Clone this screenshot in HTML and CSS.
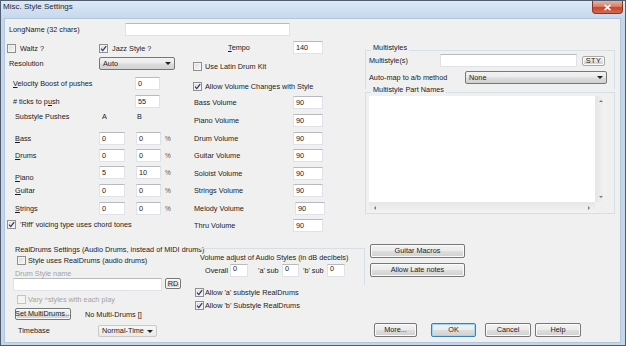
FILE: index.html
```html
<!DOCTYPE html>
<html lang="en">
<head>
    <meta charset="UTF-8">
    <meta name="viewport" content="width=device-width, initial-scale=1.0">
    <title>Misc. Style Settings</title>
    <link rel="stylesheet" href="styles.css">
</head>
<body>
<div class="window">
    <div class="titlebar">
        <span class="title">Misc. Style Settings</span>
        <span class="close">
            <svg width="9" height="7" viewBox="0 0 9 7"><path d="M1.5 0.8 L7.5 6.2 M7.5 0.8 L1.5 6.2" stroke="#fff" stroke-width="1.7" fill="none"/></svg>
        </span>
    </div>

    <div class="client">
        <!-- left + middle columns -->
        <div class="left">
            <div class="row r-longname">
                <span class="lbl lbl-long">LongName (32 chars)</span>
                <span class="edit edit-long"></span>
            </div>

            <div class="cols">
                <div class="col-a">
                    <div class="row r-checks">
                        <span class="check check-waltz"><span class="box"></span>Waltz ?</span>
                        <span class="check"><span class="box"><svg width="7" height="7" viewBox="0 0 7 7"><path d="M1 3.6 L2.8 5.6 L6.2 1.2" /></svg></span>Jazz Style ?</span>
                    </div>
                    <div class="row r-res">
                        <span class="lbl lbl-res">Resolution</span>
                        <span class="combo combo-res">Auto<i class="arrow"></i></span>
                    </div>
                    <div class="row r-push r-vel">
                        <span class="lbl lbl-push"><u>V</u>elocity Boost of pushes</span>
                        <span class="edit edit-push">0</span>
                    </div>
                    <div class="row r-push r-ticks">
                        <span class="lbl lbl-push"># ticks to p<u>u</u>sh</span>
                        <span class="edit edit-push">55</span>
                    </div>
                    <div class="row r-head">
                        <span class="lbl lbl-sub">Substyle Pushes</span>
                        <span class="lbl lbl-a">A</span>
                        <span class="lbl">B</span>
                    </div>
                    <div class="row r-part first">
                        <span class="lbl lbl-part"><u>B</u>ass</span>
                        <span class="edit edit-a">0</span><span class="edit edit-b">0</span><span class="pct">%</span>
                    </div>
                    <div class="row r-part">
                        <span class="lbl lbl-part"><u>D</u>rums</span>
                        <span class="edit edit-a">0</span><span class="edit edit-b">0</span><span class="pct">%</span>
                    </div>
                    <div class="row r-part">
                        <span class="lbl lbl-part lbl-low"><u>P</u>iano</span>
                        <span class="edit edit-a">5</span><span class="edit edit-b">10</span><span class="pct">%</span>
                    </div>
                    <div class="row r-part wide">
                        <span class="lbl lbl-part"><u>G</u>uitar</span>
                        <span class="edit edit-a">0</span><span class="edit edit-b">0</span><span class="pct">%</span>
                    </div>
                    <div class="row r-part wide">
                        <span class="lbl lbl-part"><u>S</u>trings</span>
                        <span class="edit edit-a">0</span><span class="edit edit-b">0</span><span class="pct">%</span>
                    </div>
                    <div class="row r-riff">
                        <span class="check"><span class="box"><svg width="7" height="7" viewBox="0 0 7 7"><path d="M1 3.6 L2.8 5.6 L6.2 1.2" /></svg></span>'Riff' voicing type uses chord tones</span>
                    </div>
                </div>

                <div class="col-b">
                    <div class="row r-tempo">
                        <span class="lbl lbl-tempo"><u>T</u>empo</span>
                        <span class="edit edit-vol">140</span>
                    </div>
                    <div class="row r-flag r-latin">
                        <span class="check"><span class="box"></span>Use Latin Drum Kit</span>
                    </div>
                    <div class="row r-flag r-allow">
                        <span class="check"><span class="box"><svg width="7" height="7" viewBox="0 0 7 7"><path d="M1 3.6 L2.8 5.6 L6.2 1.2" /></svg></span>Allow Volume Changes with Style</span>
                    </div>
                    <div class="row r-vol">
                        <span class="lbl lbl-vol">Bass Volume</span><span class="edit edit-vol">90</span>
                    </div>
                    <div class="row r-vol wide">
                        <span class="lbl lbl-vol">Piano Volume</span><span class="edit edit-vol">90</span>
                    </div>
                    <div class="row r-vol wide">
                        <span class="lbl lbl-vol">Drum Volume</span><span class="edit edit-vol">90</span>
                    </div>
                    <div class="row r-vol">
                        <span class="lbl lbl-vol">Guitar Volume</span><span class="edit edit-vol">90</span>
                    </div>
                    <div class="row r-vol wide">
                        <span class="lbl lbl-vol">Soloist Volume</span><span class="edit edit-vol">90</span>
                    </div>
                    <div class="row r-vol">
                        <span class="lbl lbl-vol">Strings Volume</span><span class="edit edit-vol">90</span>
                    </div>
                    <div class="row r-vol wide">
                        <span class="lbl lbl-vol">Melody Volume</span><span class="edit edit-vol nudge">90</span>
                    </div>
                    <div class="row r-vol">
                        <span class="lbl lbl-vol">Thru Volume</span><span class="edit edit-vol">90</span>
                    </div>
                </div>
            </div>

            <!-- RealDrums -->
            <div class="rd">
                <div class="rd-left">
                    <div class="row rd-cap">RealDrums Settings (Audio Drums, instead of MIDI drums)</div>
                    <div class="row r-rdflag">
                        <span class="check"><span class="box"></span>Style uses RealDrums (audio drums)</span>
                    </div>
                    <div class="row r-dsn">Drum Style name</div>
                    <div class="row r-dsin">
                        <span class="edit edit-dsn"></span>
                        <span class="btn btn-rd">RD</span>
                    </div>
                    <div class="row r-rdflag r-vary">
                        <span class="check disabled"><span class="box"></span>Vary ^styles with each play</span>
                    </div>
                    <div class="row r-multi">
                        <span class="btn btn-multi">Set MultiDrums...</span>
                        <span class="multi-txt">No Multi-Drums []</span>
                    </div>
                    <div class="row r-time">
                        <span class="lbl lbl-time">Timebase</span>
                        <span class="combo combo-time">Normal-Time<i class="arrow"></i></span>
                    </div>
                </div>

                <div class="rd-right">
                    <div class="voladj">
                        <div class="va-title">Volume adjust of Audio Styles (in dB decibels)</div>
                        <div class="row r-va">
                            <span class="lbl lbl-overall">Overall</span>
                            <span class="edit edit-va">0</span>
                            <span class="lbl lbl-sub2">'a' sub</span>
                            <span class="edit edit-va narrow">0</span>
                            <span class="lbl lbl-sub2 tight">'b' sub</span>
                            <span class="edit edit-va">0</span>
                        </div>
                    </div>
                    <div class="row r-rdallow">
                        <span class="check"><span class="box"><svg width="7" height="7" viewBox="0 0 7 7"><path d="M1 3.6 L2.8 5.6 L6.2 1.2" /></svg></span>Allow 'a' substyle RealDrums</span>
                    </div>
                    <div class="row r-rdallow second">
                        <span class="check"><span class="box"><svg width="7" height="7" viewBox="0 0 7 7"><path d="M1 3.6 L2.8 5.6 L6.2 1.2" /></svg></span>Allow 'b' Substyle RealDrums</span>
                    </div>
                </div>
            </div>
        </div>

        <!-- right column -->
        <div class="right">
            <fieldset class="group ms">
                <legend>Multistyles</legend>
                <div class="row r-ms">
                    <span class="lbl lbl-ms">Multistyle(s)</span>
                    <span class="edit edit-ms"></span>
                    <span class="btn btn-sty">STY</span>
                </div>
                <div class="row r-map">
                    <span class="lbl lbl-map">Auto-map to a/b method</span>
                    <span class="combo combo-map">None<i class="arrow"></i></span>
                </div>
            </fieldset>

            <fieldset class="group pn">
                <legend>Multistyle Part Names</legend>
                <div class="list">
                    <div class="list-body"></div>
                    <div class="vscroll"><i class="arr up"></i><i class="arr down"></i></div>
                    <div class="hscroll"><i class="arr left"></i><i class="arr right"></i></div>
                    <div class="corner"></div>
                </div>
            </fieldset>

            <span class="btn btn-side first">Guitar Macros</span>
            <span class="btn btn-side">Allow Late notes</span>

            <div class="row bottom-btns">
                <span class="btn btn-more">More...</span>
                <span class="btn btn-ok">OK</span>
                <span class="btn btn-cancel">Cancel</span>
                <span class="btn btn-help">Help</span>
            </div>
        </div>
    </div>
</div>
</body>
</html>
```

FILE: styles.css
```css
* {
    box-sizing: border-box;
}

body {
    margin: 0;
    background: #ffffff;
    font-family: "Liberation Sans", Arial, sans-serif;
    font-size: 7.3px;
    color: #1b1b1b;
}

/* Window frame */
.window {
    width: 626px;
    height: 346px;
    border: 1px solid #4f5d6e;
    background: #c3d6eb;
    display: flex;
    flex-direction: column;
}

.titlebar {
    height: 18px;
    flex-shrink: 0;
    display: flex;
    justify-content: space-between;
    align-items: flex-start;
    background: linear-gradient(#dce8f5, #c5d8ec);
}

.title {
    font-size: 8px;
    line-height: 12px;
    padding-left: 2px;
    color: #1d2a3a;
}

.close {
    width: 31px;
    height: 13px;
    margin-right: 2px;
    border: 1px solid #8a3324;
    border-top: none;
    border-radius: 0 0 4px 4px;
    background: linear-gradient(#e9b0a2 0%, #d9806b 45%, #c7452c 55%, #d36b51 100%);
    display: flex;
    align-items: center;
    justify-content: center;
}

.client {
    height: 323px;
    margin: 0 5px 3px 4px;
    background: #f0f0f0;
    box-shadow: 0 0 0 1px #b3c6db;
    display: flex;
}

.left {
    width: 360px;
    display: flex;
    flex-direction: column;
}

.right {
    width: 255px;
    display: flex;
    flex-direction: column;
}

/* Common controls */
.row {
    display: flex;
    align-items: center;
    flex-shrink: 0;
}

.lbl {
    flex-shrink: 0;
    white-space: nowrap;
    line-height: 10px;
}

.edit {
    height: 13px;
    flex-shrink: 0;
    background: #ffffff;
    border: 1px solid #dfe2e8;
    border-top-color: #b7bac1;
    padding: 0 2px;
    line-height: 11px;
    white-space: nowrap;
    overflow: hidden;
}

.check {
    display: flex;
    align-items: center;
    gap: 4px;
    white-space: nowrap;
}

.box {
    width: 9px;
    height: 9px;
    flex-shrink: 0;
    border: 1px solid #8e8f8f;
    background: linear-gradient(135deg, #d8d8d8, #fbfbfb);
    box-shadow: inset 0 0 0 1px #f4f4f4;
    display: flex;
    align-items: center;
    justify-content: center;
}

.box path {
    fill: none;
    stroke: #2e3c68;
    stroke-width: 1.3;
}

.check.disabled {
    color: #a3a3a3;
}

.check.disabled .box {
    border-color: #c4c4c4;
    background: #f4f4f4;
}

.btn {
    height: 14px;
    flex-shrink: 0;
    border: 1px solid #777777;
    border-radius: 2px;
    background: linear-gradient(#f3f3f3 0%, #ebebeb 48%, #dedede 52%, #d0d0d0 100%);
    box-shadow: inset 0 0 0 1px #fbfbfb;
    display: flex;
    align-items: center;
    justify-content: center;
    line-height: 10px;
    white-space: nowrap;
}

.combo {
    height: 13px;
    flex-shrink: 0;
    border: 1px solid #777777;
    border-radius: 2px;
    background: linear-gradient(#f2f2f2 0%, #eaeaea 48%, #dcdcdc 52%, #d2d2d2 100%);
    display: flex;
    align-items: center;
    justify-content: space-between;
    padding: 0 3px 0 3px;
    line-height: 10px;
    white-space: nowrap;
}

.arrow {
    width: 0;
    height: 0;
    border-left: 3px solid transparent;
    border-right: 3px solid transparent;
    border-top: 3px solid #202020;
}

/* Top rows */
.r-longname {
    margin-top: 4px;
    height: 13px;
    padding-left: 4px;
}

.lbl-long { width: 116px; }
.edit-long { width: 165px; }

.cols {
    display: flex;
    margin-top: 5px;
}

.col-a {
    width: 185px;
    display: flex;
    flex-direction: column;
}

.col-b {
    width: 175px;
    display: flex;
    flex-direction: column;
}

.r-checks {
    margin-top: 2px;
    height: 11px;
    padding-left: 2px;
}

.check-waltz { width: 92px; }

.r-res {
    margin-top: 3px;
    height: 13px;
    padding-left: 4px;
}

.lbl-res { width: 90px; }
.combo-res { width: 76px; }

.r-push {
    height: 13px;
    padding-left: 8px;
}

.r-vel { margin-top: 7px; }
.r-ticks { margin-top: 5px; }
.lbl-push { width: 122px; }
.edit-push { width: 25px; }

.r-head {
    margin-top: 4px;
    height: 10px;
    padding-left: 10px;
}

.lbl-sub { width: 87px; }
.lbl-a { width: 35px; }

.r-part {
    height: 13px;
    padding-left: 10px;
    margin-top: 4px;
}

.r-part.first { margin-top: 10px; }
.r-part.wide { margin-top: 5px; }
.lbl-part { width: 84px; }

.lbl-low {
    align-self: flex-end;
    margin-bottom: -4px;
}

.edit-a { width: 26px; }
.edit-b { width: 25px; margin-left: 11px; }

.pct {
    margin-left: 4px;
    color: #555555;
    font-size: 6.5px;
}

.r-riff {
    margin-top: 4px;
    height: 11px;
    padding-left: 2px;
}

/* Middle column */
.r-tempo {
    height: 13px;
    padding-left: 38px;
}

.lbl-tempo { width: 65px; }

.r-flag {
    height: 11px;
    padding-left: 3px;
}

.r-flag .check { gap: 3px; }
.r-latin { margin-top: 7px; }
.r-allow { margin-top: 9px; }

.r-vol {
    height: 13px;
    padding-left: 4px;
    margin-top: 4px;
}

.r-vol.wide { margin-top: 5px; }
.lbl-vol { width: 99px; }
.edit-vol { width: 30px; }
.edit-vol.nudge { margin-left: 2px; }

/* RealDrums section */
.rd {
    display: flex;
    margin-top: 13px;
}

.rd-left {
    width: 185px;
    display: flex;
    flex-direction: column;
}

.rd-cap {
    height: 10px;
    padding-left: 10px;
    white-space: nowrap;
    line-height: 10px;
}

.r-rdflag {
    height: 10px;
    padding-left: 12px;
}

.r-rdflag .check { gap: 2px; }

.r-dsn {
    margin-top: 3px;
    height: 10px;
    padding-left: 10px;
    color: #a3a3a3;
}

.r-dsin {
    height: 13px;
    padding-left: 8px;
    align-items: flex-start;
}

.edit-dsn { width: 149px; }

.btn-rd {
    width: 16px;
    height: 11px;
    margin-left: 3px;
}

.r-vary { margin-top: 3px; }

.r-multi {
    margin-top: 4px;
    height: 12px;
    padding-left: 10px;
}

.btn-multi {
    width: 56px;
    height: 12px;
}

.multi-txt { margin-left: 14px; }

.r-time {
    margin-top: 5px;
    height: 12px;
    padding-left: 13px;
}

.lbl-time { width: 80px; }

.combo-time {
    width: 59px;
    height: 12px;
    border-color: #c9c9c9;
    background: linear-gradient(#f7f7f7, #e9e9e9);
}

.rd-right {
    width: 175px;
    display: flex;
    flex-direction: column;
}

.voladj {
    margin-top: 3px;
    margin-left: 9px;
    width: 166px;
    height: 37px;
    border-top: 1px solid #d5dfe5;
    border-right: 1px solid #d5dfe5;
    display: flex;
    flex-direction: column;
}

.va-title {
    margin-top: 4px;
    height: 10px;
    line-height: 10px;
    padding-left: 1px;
    white-space: nowrap;
}

.r-va {
    margin-top: 1px;
    height: 13px;
    padding-left: 6px;
}

.lbl-overall { width: 25px; }

.edit-va {
    width: 18px;
    line-height: 8px;
    align-self: stretch;
}

.edit-va.narrow { width: 17px; }
.lbl-sub2 { width: 24px; margin-left: 10px; }
.lbl-sub2.tight { margin-left: 4px; }

.r-rdallow {
    height: 10px;
    padding-left: 5px;
    margin-top: 2px;
}

.r-rdallow .check { gap: 1px; }
.r-rdallow.second { margin-top: 3px; }

/* Right column groups */
.group {
    margin: 0;
    padding: 0;
    min-width: 0;
    width: 250px;
    border: 1px solid #d5dfe5;
}

.group legend {
    margin-left: 5px;
    padding: 0 2px 4px;
    line-height: 6px;
}

.ms {
    margin-top: 26px;
    border-bottom: none;
    padding-bottom: 5px;
}

.r-ms {
    margin-top: -1px;
    height: 13px;
    padding-left: 3px;
}

.lbl-ms { width: 71px; }
.edit-ms { width: 137px; }

.btn-sty {
    width: 23px;
    height: 10px;
    margin-left: 5px;
    border-color: #a8a8a8;
    letter-spacing: 0.4px;
}

.r-map {
    margin-top: 4px;
    height: 13px;
    padding-left: 3px;
}

.lbl-map { width: 96px; }
.combo-map { width: 142px; }

.pn {
    margin-top: -2px;
}

.list {
    margin: -1px 0 0 3px;
    width: 237px;
    height: 117px;
    display: grid;
    grid-template-columns: 1fr 11px;
    grid-template-rows: 1fr 11px;
}

.list-body {
    background: #ffffff;
}

.vscroll {
    background: linear-gradient(90deg, #e6e6e6, #f3f3f3);
    display: flex;
    flex-direction: column;
    justify-content: space-between;
    align-items: center;
    padding: 4px 0;
}

.hscroll {
    background: linear-gradient(#e6e6e6, #f3f3f3);
    display: flex;
    justify-content: space-between;
    align-items: center;
    padding: 0 5px;
}

.corner {
    background: #f0f0f0;
}

.arr {
    width: 0;
    height: 0;
    border: 2px solid transparent;
}

.arr.up { border-bottom-color: #7a7a7a; border-top-width: 0; }
.arr.down { border-top-color: #7a7a7a; border-bottom-width: 0; }
.arr.left { border-right-color: #7a7a7a; border-left-width: 0; }
.arr.right { border-left-color: #7a7a7a; border-right-width: 0; }

/* Buttons */
.btn-side {
    width: 95px;
    margin-left: 5px;
    margin-top: 5px;
}

.btn-side.first { margin-top: 30px; }

.bottom-btns {
    margin-top: 46px;
    height: 14px;
    padding-left: 9px;
}

.btn-more { width: 43px; }
.btn-ok {
    width: 45px;
    margin-left: 14px;
    border-color: #3c7fb1;
    box-shadow: inset 0 0 0 1px #9fd8f5;
}
.btn-cancel { width: 46px; margin-left: 9px; }
.btn-help { width: 46px; margin-left: 4px; }
```
